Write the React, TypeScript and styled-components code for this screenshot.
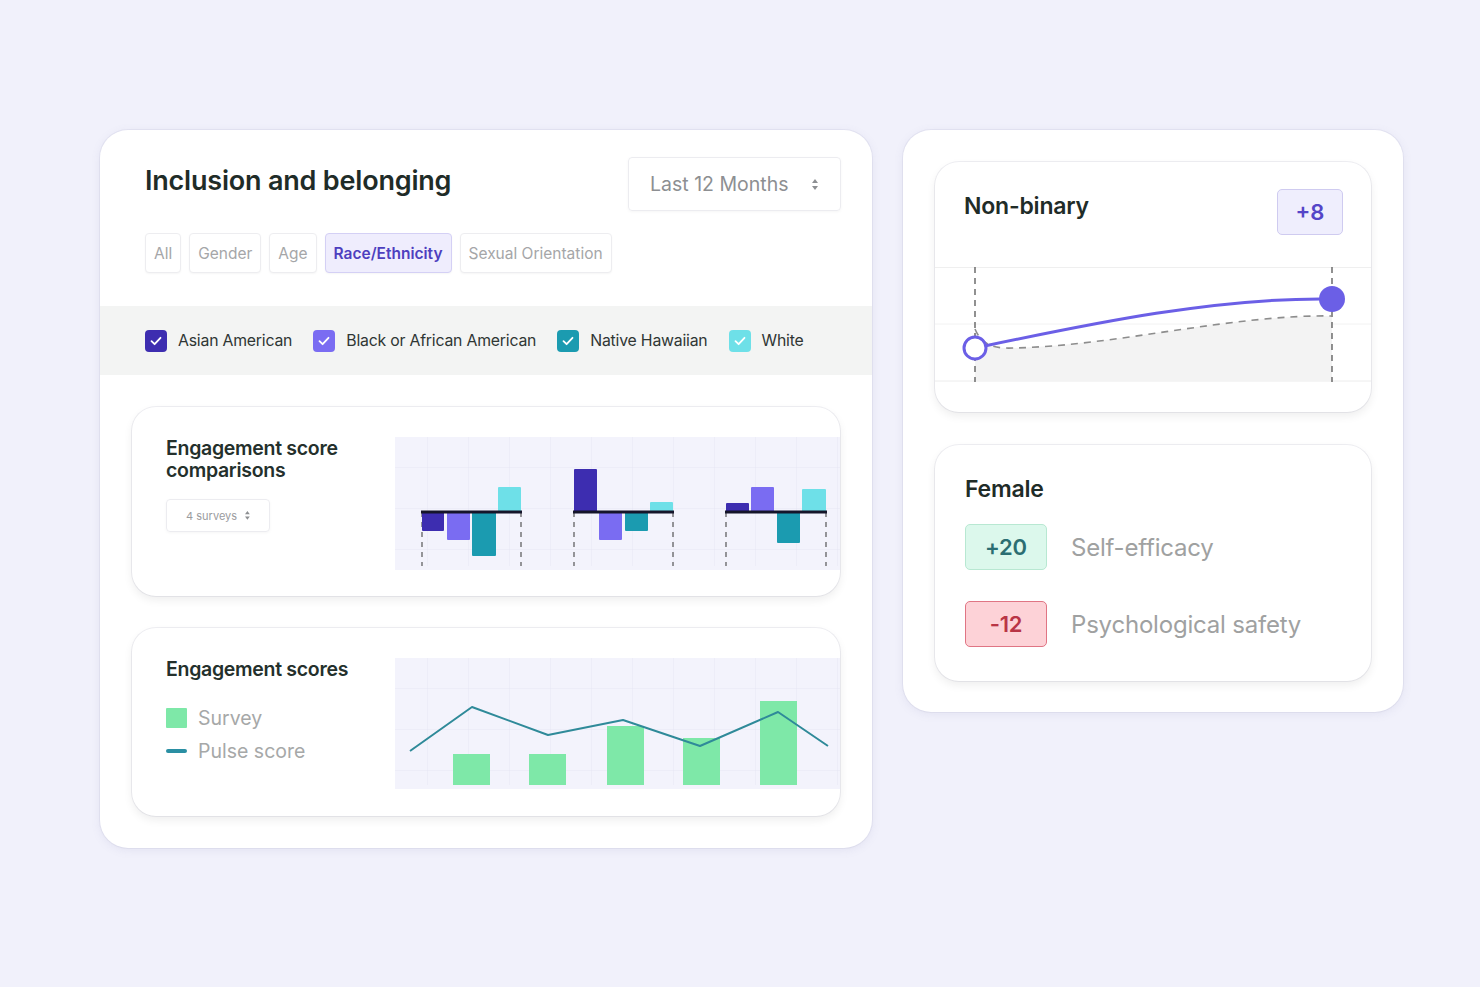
import React from 'react';
import styled, { createGlobalStyle } from 'styled-components';

const GlobalStyle = createGlobalStyle`
  html, body {
    margin: 0;
    padding: 0;
    background: #f1f1fb;
    font-family: Inter, "Noto Sans", "Liberation Sans", sans-serif;
  }
`;

const Page = styled.div`
  width: 1480px;
  height: 987px;
  box-sizing: border-box;
  padding: 130px 0 0 100px;
  display: flex;
  align-items: flex-start;
  gap: 31px;
  background: #f1f1fb;
`;

const Panel = styled.div<{ $w: number }>`
  width: ${(p) => p.$w}px;
  box-sizing: border-box;
  background: #fff;
  border-radius: 28px;
  box-shadow: 0 2px 10px rgba(120, 120, 170, 0.12), 0 0 0 1px rgba(225, 225, 240, 0.7);
  overflow: hidden;
`;

const LeftPanel = styled(Panel)`
  padding-bottom: 32px;
`;

const RightPanel = styled(Panel)`
  padding: 32px 32px 31px;
  display: flex;
  flex-direction: column;
  gap: 33px;
`;

const Header = styled.div`
  display: flex;
  justify-content: space-between;
  align-items: flex-start;
  padding: 27px 31px 0 45px;
`;

const Title = styled.h1`
  margin: 7px 0 0;
  font-size: 27px;
  font-weight: 600;
  letter-spacing: -0.2px;
  color: #1f2c28;
`;

const Select = styled.div`
  width: 213px;
  height: 54px;
  box-sizing: border-box;
  border: 1px solid #ececf0;
  border-radius: 4px;
  box-shadow: 0 1px 3px rgba(0, 0, 0, 0.04);
  display: flex;
  align-items: center;
  justify-content: space-between;
  padding: 0 22px 0 21px;
  font-size: 19.5px;
  color: #8d8f92;
`;

const SmallSelect = styled(Select)`
  width: 104px;
  height: 33px;
  justify-content: center;
  gap: 8px;
  padding: 0;
  font-size: 11px;
  color: #9a9b9e;
  margin-top: 18px;
`;

const Tabs = styled.div`
  display: flex;
  gap: 8px;
  padding: 22px 45px 0;
`;

const Tab = styled.div<{ $active?: boolean }>`
  height: 40px;
  box-sizing: border-box;
  padding: 0 8px;
  display: flex;
  align-items: center;
  border-radius: 4px;
  border: 1px solid ${(p) => (p.$active ? '#d4d0f5' : '#ededf0')};
  background: ${(p) => (p.$active ? '#efedfd' : '#fff')};
  color: ${(p) => (p.$active ? '#4d3fbf' : '#a5a6a8')};
  font-size: 15.5px;
  font-weight: ${(p) => (p.$active ? 600 : 400)};
  box-shadow: 0 1px 2px rgba(0, 0, 0, 0.04);
`;

const Band = styled.div`
  margin-top: 33px;
  height: 69px;
  background: #f3f4f3;
  display: flex;
  align-items: center;
  gap: 21px;
  padding: 0 45px;
`;

const CheckItem = styled.div`
  display: flex;
  align-items: center;
  gap: 11px;
  font-size: 15.8px;
  color: #2f3634;
  letter-spacing: -0.2px;
`;

const Box = styled.span<{ $c: string }>`
  width: 22px;
  height: 22px;
  border-radius: 4px;
  background: ${(p) => p.$c};
  display: flex;
  align-items: center;
  justify-content: center;
`;

const Cards = styled.div`
  display: flex;
  flex-direction: column;
  gap: 32px;
  padding: 32px 32px 0;
`;

const ChartCard = styled.div<{ $h: number }>`
  height: ${(p) => p.$h}px;
  box-sizing: border-box;
  border-radius: 24px;
  background: #fff;
  box-shadow: 0 4px 10px rgba(0, 0, 0, 0.07), 0 0 0 1px rgba(235, 235, 240, 0.8);
  display: grid;
  grid-template-columns: 229px 1fr;
  padding: 30px 0 30px 34px;
  overflow: hidden;
`;

const CardTitle = styled.div`
  font-size: 19.5px;
  font-weight: 600;
  line-height: 22px;
  color: #24302c;
  letter-spacing: -0.3px;
`;

const Legend = styled.div`
  display: flex;
  flex-direction: column;
  gap: 9px;
  margin-top: 26px;
`;

const LegendRow = styled.div`
  display: flex;
  align-items: center;
  gap: 11px;
  font-size: 19.5px;
  color: #a6a8a8;
`;

const Swatch = styled.span<{ $c: string; $h: number }>`
  width: 21px;
  height: ${(p) => p.$h}px;
  border-radius: ${(p) => (p.$h < 6 ? 2 : 1)}px;
  background: ${(p) => p.$c};
`;

const ChartBox = styled.div`
  background: #f3f3fc;
`;

const Inner = styled.div<{ $h: number }>`
  height: ${(p) => p.$h}px;
  box-sizing: border-box;
  border-radius: 24px;
  background: #fff;
  box-shadow: 0 4px 10px rgba(0, 0, 0, 0.07), 0 0 0 1px rgba(235, 235, 240, 0.8);
  overflow: hidden;
`;

const InnerHead = styled.div`
  display: flex;
  justify-content: space-between;
  align-items: flex-start;
  padding: 27px 28px 0 29px;
  height: 105px;
  box-sizing: border-box;
`;

const InnerTitle = styled.div`
  font-size: 23px;
  font-weight: 600;
  line-height: 28px;
  color: #1f2c28;
  letter-spacing: -0.2px;
  margin-top: 3px;
`;

const FemaleTitle = styled(InnerTitle)`
  margin: 0 0 -10px;
`;

const Badge = styled.div<{ $bg: string; $bd: string; $fg: string; $w: number }>`
  width: ${(p) => p.$w}px;
  height: 46px;
  box-sizing: border-box;
  border-radius: 5px;
  border: 1.5px solid ${(p) => p.$bd};
  background: ${(p) => p.$bg};
  color: ${(p) => p.$fg};
  font-size: 22px;
  font-weight: 600;
  display: flex;
  align-items: center;
  justify-content: center;
`;

const FemaleBody = styled.div`
  padding: 30px 30px 0 30px;
  display: flex;
  flex-direction: column;
  gap: 31px;
`;

const MetricRow = styled.div`
  display: flex;
  align-items: center;
  gap: 24px;
  font-size: 24px;
  color: #9fa1a1;
  letter-spacing: -0.2px;
`;

const UpDown = ({ s = 1 }: { s?: number }) => (
  <svg width={6 * s} height={11 * s} viewBox="0 0 6 11">
    <path d="M3 0 L6 4 H0 Z M3 11 L6 7 H0 Z" fill="#8d8f92" />
  </svg>
);

const Tick = () => (
  <svg width="14" height="14" viewBox="0 0 14 14">
    <path d="M2.5 7.2 L5.6 10.2 L11.5 3.8" fill="none" stroke="#fff" strokeWidth="1.8" strokeLinecap="round" strokeLinejoin="round" />
  </svg>
);

const C = { dark: '#3d2db0', purple: '#7a6cf2', teal: '#1b9bb0', cyan: '#6ee0e8' };

const GridPattern = ({ id }: { id: string }) => (
  <defs>
    <pattern id={id} width="41" height="41" patternUnits="userSpaceOnUse" x="-8" y="-10">
      <path d="M41 0 V41 M0 41 H41" stroke="#e6e6f5" strokeWidth="1" fill="none" />
    </pattern>
  </defs>
);

type Bar = [number, number, number, number, string];

const groups: { x0: number; x1: number; bars: Bar[] }[] = [
  {
    x0: 27, x1: 126,
    bars: [[27, 75, 22, 19, C.dark], [52, 75, 23, 28, C.purple], [77, 75, 24, 44, C.teal], [103, 50, 23, 25, C.cyan]],
  },
  {
    x0: 179, x1: 278,
    bars: [[179, 32, 23, 43, C.dark], [204, 75, 23, 28, C.purple], [230, 75, 23, 19, C.teal], [255, 65, 23, 10, C.cyan]],
  },
  {
    x0: 331, x1: 431,
    bars: [[331, 66, 23, 9, C.dark], [356, 50, 23, 25, C.purple], [382, 75, 23, 31, C.teal], [407, 52, 24, 23, C.cyan]],
  },
];

const ComparisonChart = () => (
  <svg width="445" height="129" viewBox="0 0 445 129">
    <GridPattern id="g1" />
    <rect width="445" height="129" fill="url(#g1)" />
    {groups.map((g, i) => (
      <g key={i}>
        <line x1={g.x0} y1={75} x2={g.x0} y2={129} stroke="#555" strokeWidth="1.2" strokeDasharray="5 5" />
        <line x1={g.x1} y1={75} x2={g.x1} y2={129} stroke="#555" strokeWidth="1.2" strokeDasharray="5 5" />
        {g.bars.map((b, j) => (
          <rect key={j} x={b[0]} y={b[1]} width={b[2]} height={b[3]} fill={b[4]} rx="1" />
        ))}
        <rect x={g.x0 - 1} y={73.5} width={g.x1 - g.x0 + 2} height={3} fill="#15152a" />
      </g>
    ))}
  </svg>
);

const surveyBars = [[58, 96, 31], [134, 96, 31], [212, 68, 59], [288, 80, 47], [365, 43, 84]];

const ScoresChart = () => (
  <svg width="445" height="127" viewBox="0 0 445 127">
    <GridPattern id="g2" />
    <rect width="445" height="127" fill="url(#g2)" />
    {surveyBars.map(([x, y, h], i) => (
      <rect key={i} x={x} y={y} width={37} height={h} fill="#7ee8a8" />
    ))}
    <polyline
      points="15,93 77,49 153,77 228,62 305,88 383,54 433,88"
      fill="none"
      stroke="#2f8a99"
      strokeWidth="2"
      strokeLinejoin="round"
    />
  </svg>
);

const TrendChart = () => (
  <svg width="436" height="115" viewBox="0 0 436 115">
    <line x1="0" y1="0.5" x2="436" y2="0.5" stroke="#efefef" />
    <line x1="0" y1="57" x2="436" y2="57" stroke="#f2f2f2" />
    <line x1="0" y1="114" x2="436" y2="114" stroke="#ececec" />
    <path d="M40 62 C 46 76, 56 82, 78 81 C 180 79, 300 47, 397 49 L397 114 L40 114 Z" fill="#f3f3f3" />
    <line x1="40" y1="0" x2="40" y2="115" stroke="#555" strokeWidth="1.3" strokeDasharray="6 5" />
    <line x1="397" y1="0" x2="397" y2="115" stroke="#555" strokeWidth="1.3" strokeDasharray="6 5" />
    <path d="M40 62 C 46 76, 56 82, 78 81 C 180 79, 300 47, 397 49" fill="none" stroke="#8d8d8d" strokeWidth="1.6" strokeDasharray="7 6" />
    <path d="M40 81 C 150 58, 280 30, 397 32" fill="none" stroke="#6b5fe6" strokeWidth="3" />
    <circle cx="40" cy="81" r="11" fill="#fff" stroke="#6b5fe6" strokeWidth="3" />
    <circle cx="397" cy="32" r="13" fill="#6b5fe6" />
  </svg>
);

const checks = [
  { c: C.dark, label: 'Asian American' },
  { c: C.purple, label: 'Black or African American' },
  { c: C.teal, label: 'Native Hawaiian' },
  { c: C.cyan, label: 'White' },
];

const tabs = ['All', 'Gender', 'Age', 'Race/Ethnicity', 'Sexual Orientation'];

export default function App() {
  return (
    <>
      <GlobalStyle />
      <Page>
        <LeftPanel $w={772}>
          <Header>
            <Title>Inclusion and belonging</Title>
            <Select>
              Last 12 Months <UpDown />
            </Select>
          </Header>
          <Tabs>
            {tabs.map((t) => (
              <Tab key={t} $active={t === 'Race/Ethnicity'}>
                {t}
              </Tab>
            ))}
          </Tabs>
          <Band>
            {checks.map((c) => (
              <CheckItem key={c.label}>
                <Box $c={c.c}>
                  <Tick />
                </Box>
                {c.label}
              </CheckItem>
            ))}
          </Band>
          <Cards>
            <ChartCard $h={189}>
              <div>
                <CardTitle>
                  Engagement score
                  <br />
                  comparisons
                </CardTitle>
                <SmallSelect>
                  4 surveys <UpDown s={0.8} />
                </SmallSelect>
              </div>
              <ChartBox>
                <ComparisonChart />
              </ChartBox>
            </ChartCard>
            <ChartCard $h={188}>
              <div>
                <CardTitle>Engagement scores</CardTitle>
                <Legend>
                  <LegendRow>
                    <Swatch $c="#7ee8a8" $h={20} />
                    Survey
                  </LegendRow>
                  <LegendRow>
                    <Swatch $c="#2a8fa3" $h={4} />
                    Pulse score
                  </LegendRow>
                </Legend>
              </div>
              <ChartBox>
                <ScoresChart />
              </ChartBox>
            </ChartCard>
          </Cards>
        </LeftPanel>
        <RightPanel $w={500}>
          <Inner $h={250}>
            <InnerHead>
              <InnerTitle>Non-binary</InnerTitle>
              <Badge $w={66} $bg="#efeefd" $bd="#cfcbf0" $fg="#5445c8">
                +8
              </Badge>
            </InnerHead>
            <TrendChart />
          </Inner>
          <Inner $h={236}>
            <FemaleBody>
              <FemaleTitle>Female</FemaleTitle>
              <MetricRow>
                <Badge $w={82} $bg="#dcf8ec" $bd="#b8e8d2" $fg="#2b6e72">
                  +20
                </Badge>
                Self-efficacy
              </MetricRow>
              <MetricRow>
                <Badge $w={82} $bg="#fdd2d7" $bd="#e07584" $fg="#b93546">
                  -12
                </Badge>
                Psychological safety
              </MetricRow>
            </FemaleBody>
          </Inner>
        </RightPanel>
      </Page>
    </>
  );
}
